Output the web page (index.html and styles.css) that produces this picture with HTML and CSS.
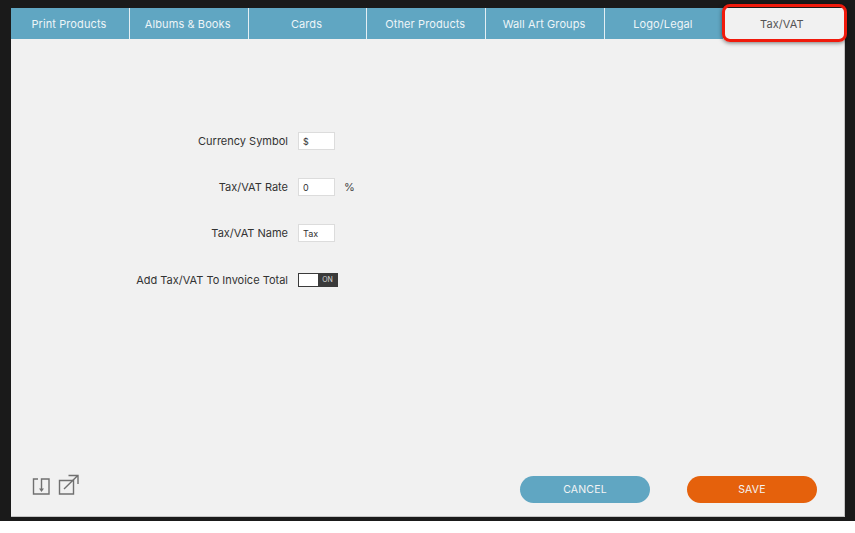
FILE: index.html
```html
<!DOCTYPE html>
<html lang="en">
<head>
    <meta charset="UTF-8">
    <title>Tax/VAT</title>
    <link rel="stylesheet" href="styles.css">
</head>
<body>
    <div class="backdrop">
        <div class="panel">
            <nav class="tabs">
                <a class="tab">Print Products</a>
                <a class="tab">Albums &amp; Books</a>
                <a class="tab">Cards</a>
                <a class="tab">Other Products</a>
                <a class="tab">Wall Art Groups</a>
                <a class="tab">Logo/Legal</a>
                <a class="tab active">Tax/VAT</a>
            </nav>

            <form class="form">
                <div class="row">
                    <label class="label">Currency Symbol</label>
                    <input class="field" type="text" value="$">
                </div>
                <div class="row">
                    <label class="label">Tax/VAT Rate</label>
                    <input class="field" type="text" value="0">
                    <span class="unit">%</span>
                </div>
                <div class="row">
                    <label class="label">Tax/VAT Name</label>
                    <input class="field" type="text" value="Tax">
                </div>
                <div class="row row-toggle">
                    <label class="label">Add Tax/VAT To Invoice Total</label>
                    <div class="toggle">
                        <span class="toggle-knob"></span>
                        <span class="toggle-on">ON</span>
                    </div>
                </div>
            </form>

            <footer class="footer">
                <div class="icons">
                    <svg width="18" height="18" viewBox="0 0 18 18" fill="none" stroke="#707070" stroke-width="1.4">
                        <path d="M6 2H1.500v15H17V2H9.500V12"/>
                        <path d="M7 11.500h5L9.500 15z" fill="#707070" stroke="none"/>
                    </svg>
                    <svg width="21" height="21" viewBox="0 0 21 21" fill="none" stroke="#707070" stroke-width="1.4">
                        <path d="M1.500 6.500h14V20h-14z"/>
                        <path d="M6 15L19.500 1.700M10.500 1.500H20V10"/>
                    </svg>
                </div>
                <div class="buttons">
                    <button class="btn btn-cancel" type="button">CANCEL</button>
                    <button class="btn btn-save" type="button">SAVE</button>
                </div>
            </footer>
        </div>
    </div>
    <div class="callout"></div>
</body>
</html>
```

FILE: styles.css
```css
html, body {
    margin: 0;
    height: 533px;
    overflow: hidden;
    background-color: #fff;
    font-family: 'Inter', 'Liberation Sans', sans-serif;
}

/* Dark window behind the dialog */
.backdrop {
    height: 521px;
    padding: 8px 10px 4px 11px;
    box-sizing: border-box;
    background-color: #1a1a1a;
}

.panel {
    height: 509px;
    box-sizing: border-box;
    display: flex;
    flex-direction: column;
    background-color: #f1f1f1;
    border-right: 1px solid #c4c4c4;
    border-bottom: 1px solid #c4c4c4;
}

/* Tabs */
.tabs {
    display: flex;
    height: 31px;
    flex-shrink: 0;
}

.tab {
    flex: 0 0 118.800px;
    box-sizing: border-box;
    display: flex;
    align-items: center;
    justify-content: center;
    padding-right: 2px;
    background-color: #60a6c2;
    color: #eef5f8;
    font-size: 11px;
    letter-spacing: 0.1px;
    border-right: 1px solid #e4eff4;
}

.tab.active {
    flex: 1;
    padding-right: 4px;
    background-color: #f1f1f1;
    color: #555;
    border-right: 0;
}

/* Form */
.form {
    flex: 1;
    padding-top: 93px;
    display: flex;
    flex-direction: column;
    gap: 28px;
}

.row {
    display: flex;
    align-items: center;
    height: 18px;
}

.row-toggle {
    margin-top: 1px;
}

.label {
    width: 277px;
    margin-right: 10px;
    text-align: right;
    color: #333;
    font-size: 11px;
}

.field {
    width: 37px;
    height: 18px;
    padding: 0 0 0 4px;
    box-sizing: border-box;
    border: 1px solid #dcdcdc;
    background-color: #fff;
    color: #333;
    font-family: inherit;
    font-size: 9px;
}

.unit {
    margin-left: 9px;
    color: #444;
    font-size: 11px;
}

.toggle {
    width: 40px;
    height: 14px;
    display: flex;
    box-sizing: border-box;
    border: 1px solid #3a3a3a;
    background-color: #3a3a3a;
}

.toggle-knob {
    width: 19px;
    background-color: #fff;
}

.toggle-on {
    flex: 1;
    text-align: center;
    color: #d8d8d8;
    font-size: 7px;
    line-height: 12px;
}

/* Footer */
.footer {
    display: flex;
    justify-content: space-between;
    align-items: center;
    height: 28px;
    padding: 0 27px 13px 21px;
}

.icons {
    display: flex;
    align-items: flex-end;
    gap: 8px;
    margin-bottom: 10px;
}

.buttons {
    display: flex;
    gap: 37px;
}

.btn {
    width: 130px;
    height: 27px;
    border: 0;
    border-radius: 14px;
    color: #f4f4f4;
    font-family: inherit;
    font-size: 10.500px;
    letter-spacing: 0.2px;
}

.btn-cancel {
    background-color: #60a6c2;
}

.btn-save {
    background-color: #e5610c;
}

/* Red annotation round the active tab */
.callout {
    position: absolute;
    left: 722px;
    top: 4px;
    width: 119px;
    height: 32px;
    border: 3px solid #f01a0c;
    border-radius: 8px;
    box-shadow: 0 1px 4px rgba(0, 0, 0, 0.5);
}
```
